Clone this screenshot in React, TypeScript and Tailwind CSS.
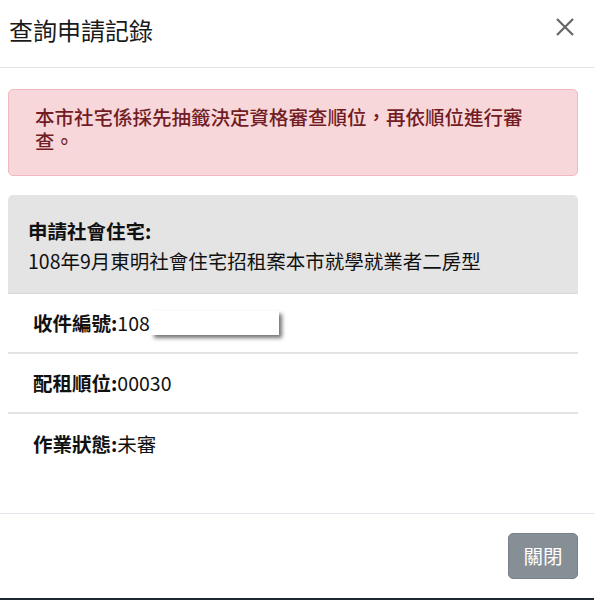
import React from "react";

export default function App() {
  return (
    <div className="w-[594px] h-[600px] bg-white flex flex-col overflow-hidden font-['Noto_Sans_CJK_TC','Noto_Sans',sans-serif] text-[19.5px] text-[#111]">
      {/* Header */}
      <div className="h-[68px] shrink-0 border-b border-[#e2e2ea] flex items-start justify-between pl-[9px] pr-[20px]">
        <h1 className="mt-[15px] text-[24px] leading-[30px] font-normal text-[#1a1a1a]">查詢申請記錄</h1>
        <svg className="mt-[18px]" width="18" height="18" viewBox="0 0 18 18" fill="none">
          <path d="M1 1L17 17M17 1L1 17" stroke="#666" strokeWidth="2.2" strokeLinecap="butt" />
        </svg>
      </div>

      {/* Body */}
      <div className="flex-1 pl-[8px] pr-[16px] pt-[21px]">
        <div className="rounded-[5px] border border-[#f1b9bf] bg-[#f8d7da] text-[#721c24] font-medium leading-[24px] pl-[26px] pr-[46px] pt-[15px] pb-[22px]">
          本市社宅係採先抽籤決定資格審查順位，再依順位進行審查。
        </div>

        <div className="mt-[19px]">
          <div className="rounded-t-[5px] bg-[#e4e4e4] pl-[20px] pt-[21px] pb-[17px] leading-[30px] border-b border-[#d9d9d9]">
            <div className="font-bold">申請社會住宅:</div>
            <div>108年9月東明社會住宅招租案本市就學就業者二房型</div>
          </div>
          <div className="h-[60px] border-b-2 border-[#e3e3e3] flex items-center pl-[25px]">
            <span className="font-bold">收件編號:</span>
            <span>108</span>
            <span className="inline-block w-[128px] h-[24px] bg-white shadow-[3px_3px_4px_rgba(0,0,0,0.55)] ml-[1px] mt-[-1px]"></span>
          </div>
          <div className="h-[60px] border-b-2 border-[#e3e3e3] flex items-center pl-[25px]">
            <span className="font-bold">配租順位:</span>
            <span>00030</span>
          </div>
          <div className="h-[60px] flex items-center pl-[25px]">
            <span className="font-bold">作業狀態:</span>
            <span>未審</span>
          </div>
        </div>
      </div>

      {/* Footer */}
      <div className="h-[87px] shrink-0 border-t border-[#e2e2ea] flex flex-col">
        <div className="flex-1 flex justify-end items-start pt-[19px] pr-[16px]">
          <button className="w-[70px] h-[46px] rounded-[5px] bg-[#868e96] border border-[#78808a] text-white text-[19.5px] leading-none">
            關閉
          </button>
        </div>
        <div className="h-[2px] bg-[#1c2732]"></div>
      </div>
    </div>
  );
}
